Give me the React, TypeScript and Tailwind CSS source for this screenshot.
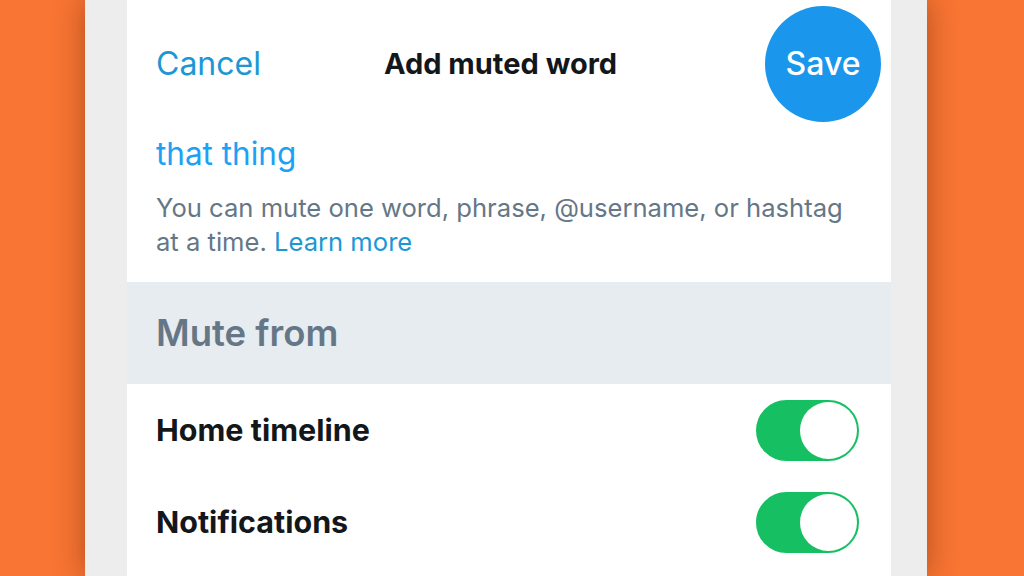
import React from 'react';

const rows = ['Home timeline', 'Notifications'];

function Toggle() {
  return (
    <div className="w-[103px] h-[61px] rounded-full bg-[#17bf63] border-2 border-[#17bf63] flex items-center justify-end">
      <div className="w-[57px] h-[57px] rounded-full bg-white" />
    </div>
  );
}

export default function App() {
  return (
    <div
      className="w-[1024px] h-[576px] overflow-hidden bg-[#f87533] flex pl-[85px]"
      style={{ fontFamily: 'Inter, "Liberation Sans", Arial, sans-serif' }}
    >
      <div className="w-[842px] h-[576px] bg-[#ededed] pl-[42px] pr-[36px] shadow-[0_0_28px_rgba(90,30,0,0.45)]">
        <div className="h-full bg-white flex flex-col">
          <div className="h-[128px] flex items-center pl-[29px] pr-[10px]">
            <span className="text-[32px] text-[#1b98d4]">Cancel</span>
            <span className="ml-[123px] text-[29px] font-bold text-[#14171a]">Add muted word</span>
            <div className="ml-auto w-[116px] h-[116px] rounded-full bg-[#1a97ec] flex items-center justify-center">
              <span className="text-[32px] font-medium text-white">Save</span>
            </div>
          </div>

          <div className="px-[29px] pt-[8px]">
            <div className="text-[31.5px] leading-[36px] text-[#1da1f2]">that thing</div>
            <p className="mt-[19px] text-[25.6px] leading-[34px] text-[#657786] whitespace-nowrap">
              You can mute one word, phrase, @username, or hashtag
              <br />
              at a time. <span className="text-[#1b98d4]">Learn more</span>
            </p>
          </div>

          <div className="mt-[23px] h-[102px] bg-[#e6ecf0] flex items-center px-[29px]">
            <span className="text-[36.5px] font-semibold text-[#657786]">Mute from</span>
          </div>

          {rows.map((label) => (
            <div key={label} className="h-[92px] flex items-center justify-between pl-[29px] pr-[32px]">
              <span className="text-[30.5px] font-bold text-[#14171a]">{label}</span>
              <Toggle />
            </div>
          ))}
        </div>
      </div>
    </div>
  );
}
